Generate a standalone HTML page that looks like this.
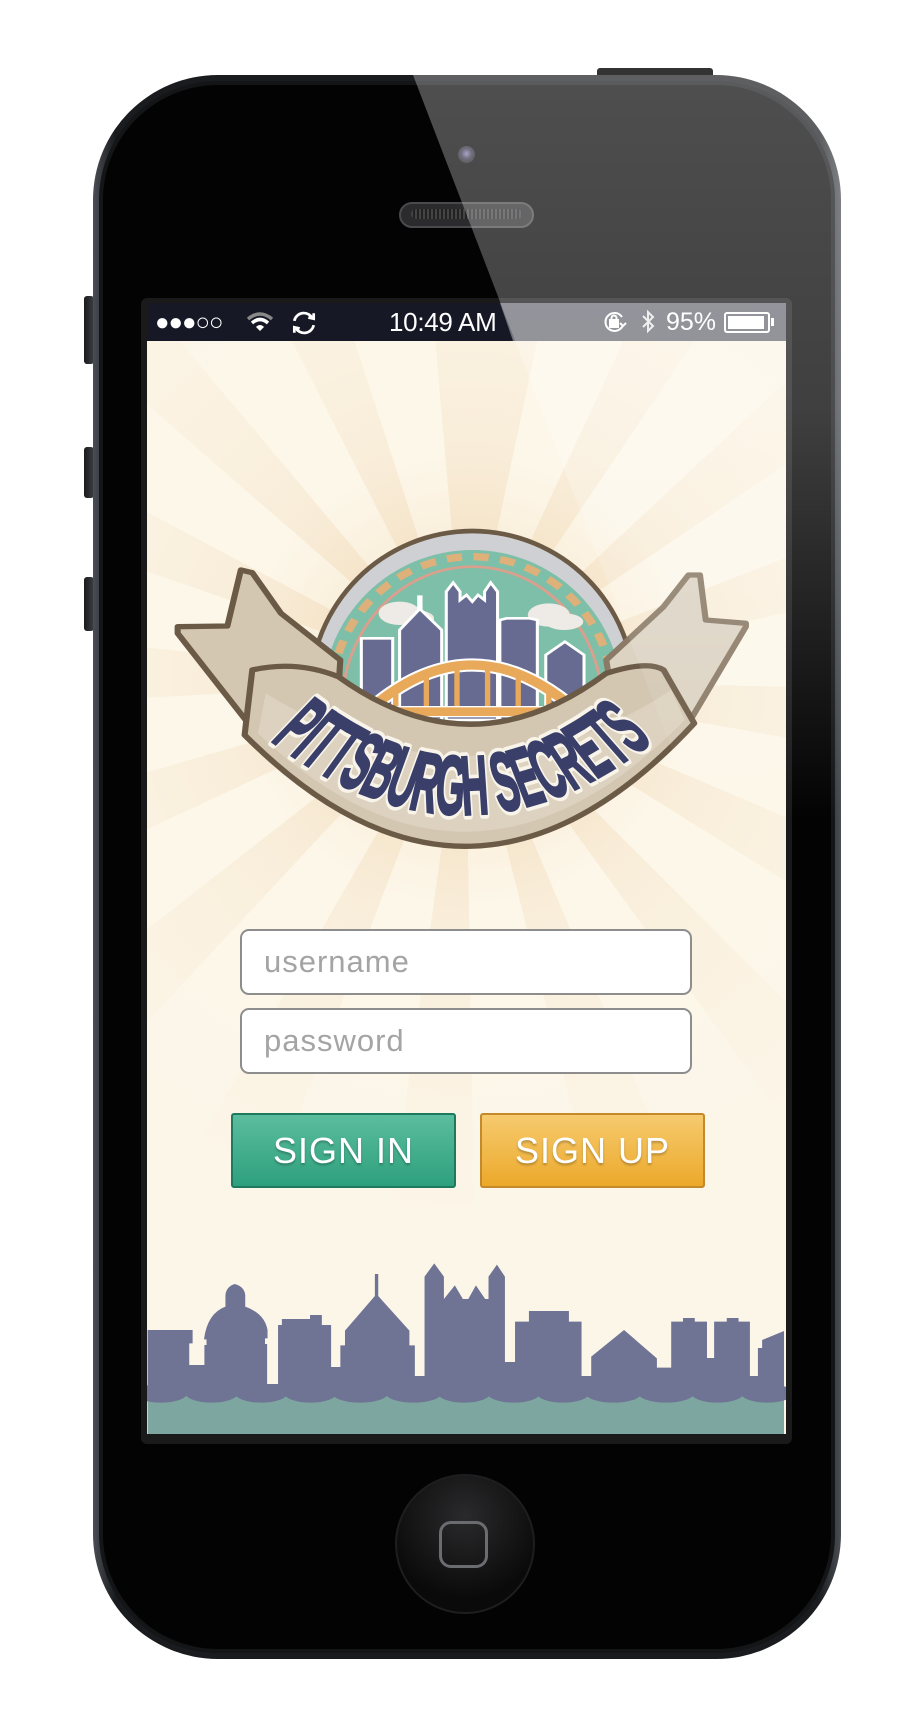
<!DOCTYPE html>
<html><head><meta charset="utf-8"><style>
*{margin:0;padding:0;box-sizing:border-box}
body{width:908px;height:1720px;background:#fff;position:relative;overflow:hidden;font-family:"Liberation Sans",sans-serif}
.abs{position:absolute}
.phone{left:93px;top:75px;width:748px;height:1584px;border-radius:125px;background:linear-gradient(90deg,#4a4e54,#1a1b1e 3%,#1a1b1e 97%,#4a4e54);}
.phone .in{position:absolute;left:6px;top:6px;right:6px;bottom:6px;border-radius:119px;background:#030303;border:4px solid #141517}
.btn{background:linear-gradient(90deg,#1a1a1a,#3c3f44);border-radius:3px}
.screen{left:141px;top:298px;width:651px;height:1146px;background:#1a1a1a;border-radius:6px}
.status{left:147px;top:303px;width:639px;height:38px;background:#161826;color:#fff;font-size:25px}
.content{left:147px;top:341px;width:639px;height:1093px;overflow:hidden;
background:
radial-gradient(circle at 318px 340px,rgba(236,205,160,.5) 0,rgba(236,205,160,0) 230px),
radial-gradient(circle at 318px 340px,rgba(253,247,234,0) 120px,rgba(253,247,234,.55) 330px,#fcf6e9 560px),
repeating-conic-gradient(from 3deg at 318px 340px,#f7e9d2 0 9deg,#fdf7ea 9deg 22deg);}
.field{background:#fff;border:2px solid #8d8d8d;border-radius:9px;color:#a4a4a4;font-size:31px;padding-left:22px;line-height:62px;letter-spacing:1px}
.b{color:#fff;font-size:36px;text-align:center;line-height:72px;border-radius:3px;text-shadow:0 2px 2px rgba(0,0,0,.25);letter-spacing:1px}
</style></head><body>
<div class="abs btn" style="left:597px;top:68px;width:116px;height:9px;background:#333;border-radius:3px 3px 0 0"></div>
<div class="abs btn" style="left:84px;top:296px;width:10px;height:68px"></div>
<div class="abs btn" style="left:84px;top:447px;width:10px;height:51px"></div>
<div class="abs btn" style="left:84px;top:577px;width:10px;height:54px"></div>
<div class="abs phone"><div class="in"></div></div>
<div class="abs" style="left:458px;top:146px;width:17px;height:17px;border-radius:50%;background:radial-gradient(circle at 50% 45%,#8a7fa8 0,#3a3650 40%,#222 70%);"></div>
<div class="abs" style="left:399px;top:202px;width:135px;height:26px;border-radius:13px;background:#2b2b2d;border:2px solid #4a4a4c"><div style="margin:5px 10px;height:10px;border-radius:5px;background:repeating-linear-gradient(90deg,#444 0 2px,#222 2px 4px)"></div></div>
<div class="abs screen"></div>
<div class="abs content">
<svg class="abs" style="left:-7px;top:899px" width="660" height="220" viewBox="0 0 1568 660" preserveAspectRatio="none">
<rect x="18" y="455" width="1512" height="127" fill="#7ea6a0"/>
<path fill="#6f7394" d="M18 270L125 270L125 310L117 310L117 375L153 375L153 315L158 315L158 298L152 298Q160 220 203 200L203 165Q205 140 225 132Q248 140 250 165L250 200Q296 220 303 270L303 295L297 295L297 312L302 312L302 432L328 432L328 255L337 255L337 237L404 237L404 225L432 225L432 255L454 255L454 381L476 381L476 316L487 316L487 272L558 168L558 102L566 102L566 168L640 272L640 316L653 316L653 408L676 408L676 110L699 70L722 110L722 177L748 136L767 177L780 177L798 136L820 177L828 177L828 110L848 74L867 110L867 366L891 366L891 245L924 245L924 213L1019 213L1019 245L1049 245L1049 408L1072 408L1072 350L1150 270L1228 355L1228 383L1262 383L1262 245L1290 245L1290 234L1318 234L1318 245L1347 245L1347 354L1364 354L1364 245L1394 245L1394 234L1422 234L1422 245L1449 245L1449 408L1468 408L1468 324L1478 324L1478 300L1530 273L1530 462L18 462Z"/>
<g fill="#6f7394">
<ellipse cx="50" cy="460" rx="62" ry="28"/><ellipse cx="170" cy="460" rx="62" ry="28"/><ellipse cx="288" cy="460" rx="62" ry="28"/><ellipse cx="405" cy="460" rx="62" ry="28"/><ellipse cx="523" cy="460" rx="66" ry="28"/><ellipse cx="650" cy="460" rx="66" ry="28"/><ellipse cx="770" cy="460" rx="62" ry="28"/><ellipse cx="888" cy="460" rx="62" ry="28"/><ellipse cx="1005" cy="460" rx="62" ry="28"/><ellipse cx="1125" cy="460" rx="66" ry="28"/><ellipse cx="1250" cy="460" rx="66" ry="28"/><ellipse cx="1372" cy="460" rx="62" ry="28"/><ellipse cx="1490" cy="460" rx="62" ry="28"/>
</g>
</svg>
</div>
<div class="abs status">
<div class="abs" style="left:8px;top:6px;font-size:24px;letter-spacing:-1px">●●●○○</div>
<svg class="abs" style="left:99px;top:7px" width="28" height="24" viewBox="0 0 28 24"><path d="M2 9Q14 -1 26 9" stroke="#888" stroke-width="3.5" fill="none"/><path d="M6 13Q14 6 22 13" stroke="#fff" stroke-width="3.5" fill="none"/><path d="M10 17Q14 13 18 17L14 21Z" fill="#fff"/></svg>
<svg class="abs" style="left:143px;top:6px" width="28" height="28" viewBox="0 0 26 26" fill="none" stroke="#fff" stroke-width="2.5"><path d="M4 11A9 9 0 0 1 21 9"/><path d="M22 15A9 9 0 0 1 5 17"/><path d="M17 8L22 9L22 4" /><path d="M9 18L4 17L4 22"/></svg>
<div class="abs" style="left:242px;top:4px;font-size:26px;letter-spacing:-0.3px">10:49 AM</div>
<svg class="abs" style="left:455px;top:6px" width="26" height="26" viewBox="0 0 26 26" fill="none" stroke="#fff" stroke-width="2"><path d="M20 8A9 9 0 1 0 21 16"/><rect x="8" y="11" width="8" height="7" fill="#fff"/><path d="M9.5 11V9a2.5 2.5 0 0 1 5 0v2"/><path d="M18 14l3 3 3-3" /></svg>
<svg class="abs" style="left:493px;top:5px" width="16" height="28" viewBox="0 0 16 28" fill="none" stroke="#ddd" stroke-width="2"><path d="M3 8L13 18L8 23L8 4L13 9L3 19"/></svg>
<div class="abs" style="left:519px;top:5px">95%</div>
<div class="abs" style="left:577px;top:9px;width:46px;height:21px;border:2px solid #fff;border-radius:3px;padding:2px"><div style="width:94%;height:100%;background:#fff"></div></div>
<div class="abs" style="left:624px;top:15px;width:3px;height:8px;background:#fff"></div>
</div>
<svg class="abs" style="left:170px;top:520px" width="600" height="340" viewBox="0 0 1568 1020" preserveAspectRatio="none">
<defs><clipPath id="cp"><rect x="0" y="0" width="1568" height="700"/></clipPath></defs>
<g clip-path="url(#cp)">
<ellipse cx="790" cy="520" rx="430" ry="494" fill="#6b5a45"/>
<ellipse cx="790" cy="520" rx="418" ry="480" fill="#cfd0d3"/>
<ellipse cx="790" cy="540" rx="392" ry="450" fill="#7dbfa8"/>
<ellipse cx="790" cy="560" rx="340" ry="420" fill="none" stroke="#d9a08e" stroke-width="8"/>
<ellipse cx="790" cy="540" rx="370" ry="430" fill="none" stroke="#deb07a" stroke-width="22" stroke-dasharray="40 30"/>
</g>
<g fill="#eeeae6"><ellipse cx="600" cy="280" rx="55" ry="35"/><ellipse cx="640" cy="295" rx="50" ry="25"/><ellipse cx="990" cy="285" rx="55" ry="35"/><ellipse cx="1030" cy="305" rx="50" ry="25"/></g>
<g fill="#676b92" stroke="#fff" stroke-width="8">
<rect x="500" y="355" width="82" height="260"/>
<path d="M600 330L650 270L650 230L656 230L656 270L710 330L710 600L600 600Z"/>
<path d="M722 215L740 188L758 215L758 240L775 225L790 245L805 225L822 240L822 215L838 188L856 215L856 600L722 600Z"/>
<path d="M862 300L880 295L940 295L960 300L960 600L862 600Z"/>
<path d="M982 405L1032 365L1082 405L1082 600L982 600Z"/>
</g>
<path d="M520 570Q790 300 1060 570" fill="none" stroke="#fff" stroke-width="40"/>
<path d="M520 570Q790 300 1060 570" fill="none" stroke="#e8a95a" stroke-width="28"/>
<g stroke="#e8a95a" stroke-width="14"><line x1="590" y1="520" x2="590" y2="570"/><line x1="670" y1="455" x2="670" y2="570"/><line x1="750" y1="430" x2="750" y2="570"/><line x1="830" y1="430" x2="830" y2="570"/><line x1="910" y1="455" x2="910" y2="570"/><line x1="990" y1="520" x2="990" y2="570"/></g>
<rect x="515" y="560" width="550" height="30" fill="#e8a95a" stroke="#fff" stroke-width="4"/>
<path d="M20 320L150 318L185 150L215 158L290 280L445 420L440 510L215 625L20 340Z" fill="#d3c7b2" stroke="#6b5a45" stroke-width="16" stroke-linejoin="round"/>
<path d="M1505 310L1400 300L1385 165L1355 165L1290 260L1140 420L1150 490L1360 600L1505 320Z" fill="#dcd3c3" stroke="#8b7b66" stroke-width="16" stroke-linejoin="round"/>
<path d="M215 450Q330 420 440 470Q790 760 1140 460Q1250 420 1290 450L1370 610Q790 1330 195 645Z" fill="#d3c7b2" stroke="#6b5a45" stroke-width="16" stroke-linejoin="round"/>
<path d="M250 520Q790 900 1310 510L1345 600Q790 1250 230 640Z" fill="#ddd2bf"/>
<defs><path id="arc" d="M262 660Q800 1130 1318 610"/></defs>
<text font-family="Liberation Sans" font-weight="bold" font-size="250" fill="#3a3f6a" stroke="#f8f4ea" stroke-width="30" paint-order="stroke" stroke-linejoin="round"><textPath href="#arc" textLength="1120" lengthAdjust="spacingAndGlyphs">PITTSBURGH SECRETS</textPath></text>
<text font-family="Liberation Sans" font-weight="bold" font-size="250" fill="#3a3f6a" stroke="#3a3f6a" stroke-width="8"><textPath href="#arc" textLength="1120" lengthAdjust="spacingAndGlyphs">PITTSBURGH SECRETS</textPath></text>
</svg>
<div class="abs field" style="left:240px;top:929px;width:452px;height:66px">username</div>
<div class="abs field" style="left:240px;top:1008px;width:452px;height:66px">password</div>
<div class="abs b" style="left:231px;top:1113px;width:225px;height:75px;background:linear-gradient(#5bbd9d,#2ea07d);border:2px solid #1e7a5e">SIGN IN</div>
<div class="abs b" style="left:480px;top:1113px;width:225px;height:75px;background:linear-gradient(#f6ca6e,#eca92b);border:2px solid #c4892a">SIGN UP</div>
<div class="abs" style="left:395px;top:1474px;width:140px;height:140px;border-radius:50%;background:radial-gradient(circle at 50% 30%,#2a2a2c,#0a0a0a 70%);border:2px solid #1e1e20"></div>
<div class="abs" style="left:439px;top:1521px;width:49px;height:47px;border:3.5px solid #6a6c70;border-radius:12px"></div>
<svg class="abs" style="left:0;top:0" width="908" height="1720">
<defs><linearGradient id="gl" x1="0" y1="75" x2="0" y2="820" gradientUnits="userSpaceOnUse"><stop offset="0" stop-color="#fff" stop-opacity="0.3"/><stop offset="0.45" stop-color="#fff" stop-opacity="0.24"/><stop offset="1" stop-color="#fff" stop-opacity="0"/></linearGradient></defs>
<polygon points="413,75 841,75 841,1190" fill="url(#gl)"/><polygon points="500,303 786,303 786,341 513,341" fill="#fff" fill-opacity="0.38"/></svg>
</body></html>
